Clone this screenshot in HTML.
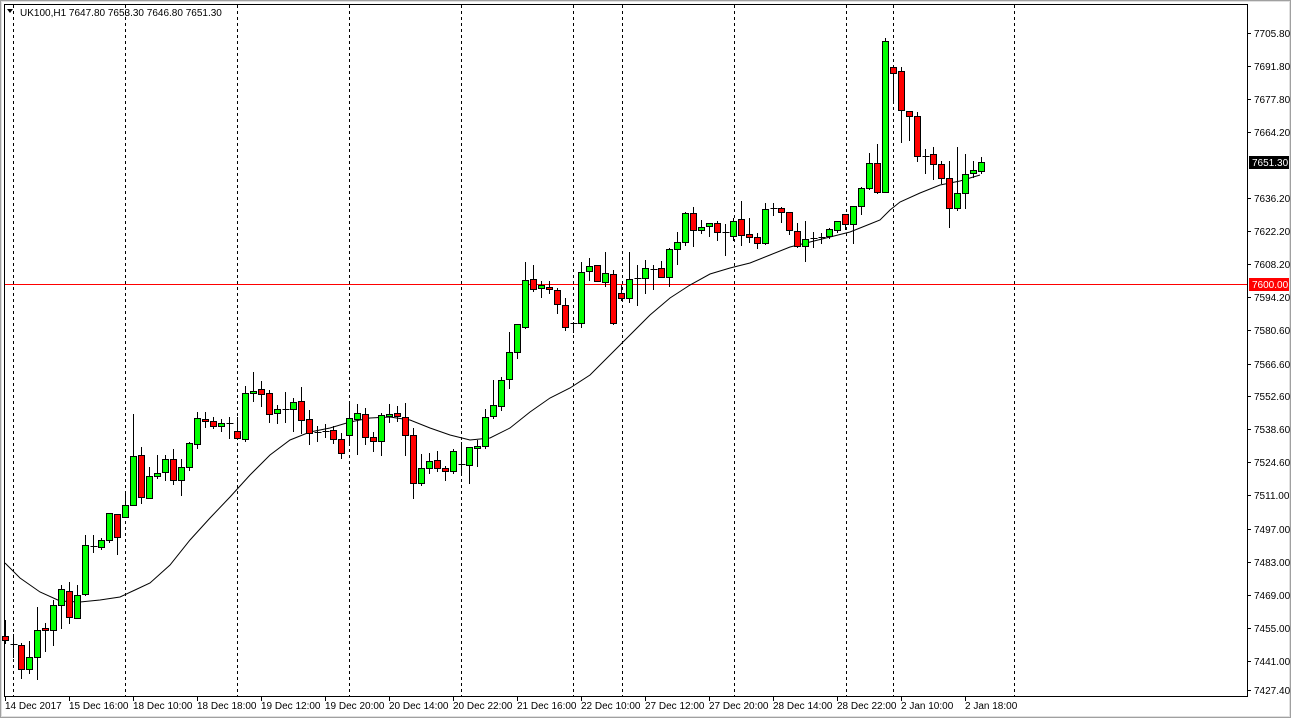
<!DOCTYPE html>
<html><head><meta charset="utf-8"><style>
html,body{margin:0;padding:0;background:#fff;overflow:hidden}
svg{display:block}
text{font-family:"Liberation Sans",sans-serif;font-size:10px;fill:#000}
</style></head><body>
<svg id="s" width="1292" height="719" xmlns="http://www.w3.org/2000/svg">
<rect x="0" y="0" width="1292" height="719" fill="#fff"/>
<rect x="0.5" y="0.5" width="1290" height="717" fill="none" stroke="#a0a0a0"/>
<rect x="1.5" y="1.5" width="1288" height="715" fill="none" stroke="#e0e0e0"/>
<line x1="4.5" y1="4" x2="4.5" y2="697" stroke="#000"/>
<line x1="4" y1="4.5" x2="1248" y2="4.5" stroke="#000"/>
<line x1="1247.5" y1="4" x2="1247.5" y2="697" stroke="#000"/>
<line x1="4" y1="696.5" x2="1248" y2="696.5" stroke="#000"/>
<g id="grid"></g>
<line x1="5" y1="284.5" x2="1247" y2="284.5" stroke="#ff0000"/>
<polyline id="ma" fill="none" stroke="#000" stroke-width="1"></polyline>
<g id="c"></g>
<g id="ax"></g>
<polygon points="7,9 13,9 10,13" fill="#000"/>
<text x="20" y="16">UK100,H1  7647.80 7653.30 7646.80 7651.30</text>
</svg>
<script>
var N="http://www.w3.org/2000/svg",s=document.getElementById('s');
function el(p,t,a,tx){var e=document.createElementNS(N,t);for(var k in a)e.setAttribute(k,a[k]);if(tx!=null)e.textContent=tx;document.getElementById(p).appendChild(e);return e;}
[13,125,237,349,461,573,622,734,846,893,1014].forEach(function(x){el('grid','line',{x1:x+.5,y1:5,x2:x+.5,y2:696,stroke:'#000','stroke-dasharray':'3,3'});});
var ma=[[5,563],[20,578],[40,592],[60,601],[80,602],[100,600],[120,597],[135,590],[150,583],[170,565],[190,540],[210,518],[230,497],[250,475],[270,455],[290,440],[310,432],[330,428],[350,422],[370,418],[390,417],[410,420],[430,428],[450,435],[470,440],[490,438],[510,428],[530,412],[550,398],[570,388],[590,375],[610,355],[630,335],[650,315],[670,298],[690,285],[710,274],[730,268],[750,263],[770,255],[790,247],[810,242],[830,237],[850,232],[870,224],[880,220],[890,210],[900,202],[920,193],[940,185],[960,181],[980,175]];
document.getElementById('ma').setAttribute('points',ma.map(function(p){return p.join(',')}).join(' '));
// [bodyTop, bodyBot, hi, lo, type g/r/d]
var C=[[636,640,620,643,'r'],[644,644,634,657,'d'],[645,669,643,678,'r'],[657,669,641,673,'g'],[630,657,607,679,'g'],[628,630,623,651,'r'],[605,630,600,645,'g'],[589,605,585,628,'g'],[591,617,582,623,'r'],[595,618,585,618,'g'],[545,594,535,595,'g'],[546,546,535,552,'d'],[540,547,538,549,'g'],[513,540,513,542,'g'],[514,537,514,554,'r'],[505,517,494,517,'g'],[456,505,414,505,'g'],[455,497,447,503,'r'],[476,498,467,498,'g'],[473,476,455,478,'g'],[459,472,455,480,'g'],[459,480,449,484,'r'],[467,480,459,495,'g'],[443,467,442,470,'g'],[418,444,412,448,'g'],[419,421,412,427,'r'],[421,426,417,428,'r'],[423,426,419,431,'g'],[423,423,417,438,'d'],[431,438,417,438,'r'],[393,439,386,441,'g'],
[391,393,372,401,'g'],[389,394,381,406,'r'],[393,414,390,422,'r'],[409,413,405,423,'g'],[409,409,392,422,'d'],[402,409,398,431,'g'],[401,420,387,433,'r'],[419,433,410,444,'r'],[432,432,426,441,'d'],[431,431,424,437,'d'],[430,439,426,443,'r'],[439,453,433,458,'r'],[418,435,403,445,'g'],[413,419,404,454,'g'],[414,437,408,444,'r'],[437,441,432,451,'r'],[415,441,413,455,'g'],[414,416,404,422,'g'],[413,416,406,421,'r'],[417,435,403,455,'r'],[435,483,428,498,'r'],[468,483,454,485,'g'],[461,468,453,473,'g'],[460,468,451,471,'r'],[468,471,466,480,'r'],[451,471,449,473,'g'],[464,464,442,473,'d'],[447,465,447,483,'g'],[446,448,440,466,'g'],[417,446,409,448,'g'],
[405,416,380,418,'g'],[380,406,377,410,'g'],[352,379,332,388,'g'],[324,352,324,358,'g'],[280,327,262,328,'g'],[279,289,265,291,'r'],[285,288,281,297,'g'],[287,289,281,293,'r'],[290,304,288,313,'r'],[305,327,298,330,'r'],[323,323,322,332,'d'],[272,323,262,327,'g'],[266,271,258,280,'g'],[265,281,265,281,'r'],[273,282,252,286,'g'],[274,323,270,324,'r'],[293,298,285,300,'r'],[279,298,252,302,'g'],[278,278,265,305,'d'],[268,278,260,293,'g'],[269,269,265,289,'d'],[268,277,261,277,'r'],[249,277,248,286,'g'],[242,249,232,264,'g'],[213,242,212,245,'g'],[213,230,207,246,'r'],[227,230,220,233,'g'],[223,226,223,236,'g'],[223,232,221,240,'r'],[232,232,224,255,'d'],[221,236,218,240,'g'],
[219,235,201,245,'r'],[234,237,218,242,'r'],[237,243,233,248,'r'],[209,243,203,244,'g'],[208,208,203,215,'d'],[208,212,207,222,'r'],[212,230,212,234,'r'],[231,246,223,247,'r'],[239,246,221,261,'g'],[238,238,232,247,'d'],[237,237,233,243,'d'],[229,236,228,238,'g'],[221,230,221,232,'g'],[214,224,214,229,'r'],[206,224,206,243,'g'],[188,206,187,214,'g'],[163,188,153,189,'g'],[163,192,144,193,'r'],[41,192,38,192,'g'],[67,73,65,103,'r'],[71,110,67,142,'r'],[111,116,111,140,'r'],[116,156,112,161,'r'],[156,156,149,173,'d'],[154,164,147,179,'r'],[164,178,161,183,'r'],[178,208,161,227,'r'],[193,208,147,210,'g'],[174,193,154,208,'g'],[170,173,161,177,'g'],[162,171,157,173,'g']];
C.forEach(function(c,i){var x=5.5+8*i;
el('c','line',{x1:x,y1:c[2],x2:x,y2:c[3]+1,stroke:'#000'});
if(c[4]=='d'){el('c','line',{x1:x-3,y1:c[0]+.5,x2:x+4,y2:c[0]+.5,stroke:'#000'});}
else{var h=Math.max(2,c[1]-c[0]);el('c','rect',{x:x-3,y:c[0]+.5,width:6,height:h,fill:c[4]=='g'?'#00ff00':'#ff0000',stroke:'#000'});}
});
var P=[['7705.80',33],['7691.80',66],['7677.80',99],['7664.20',132],['7636.20',198],['7622.20',231],['7608.20',264],['7594.20',297],['7580.60',330],['7566.60',364],['7552.60',396],['7538.60',429],['7524.60',462],['7511.00',495],['7497.00',529],['7483.00',562],['7469.00',595],['7455.00',628],['7441.00',661],['7427.40',690]];
P.forEach(function(p){el('ax','line',{x1:1247,y1:p[1]+.5,x2:1251,y2:p[1]+.5,stroke:'#000'});el('ax','text',{x:1254,y:p[1]+4},p[0]);});
el('ax','rect',{x:1249,y:156,width:40,height:13,fill:'#000'});el('ax','text',{x:1252,y:166,style:'fill:#fff'},'7651.30');
el('ax','rect',{x:1249,y:278,width:40,height:13,fill:'#ff0000'});el('ax','text',{x:1252,y:288,style:'fill:#fff'},'7600.00');
var D=['14 Dec 2017','15 Dec 16:00','18 Dec 10:00','18 Dec 18:00','19 Dec 12:00','19 Dec 20:00','20 Dec 14:00','20 Dec 22:00','21 Dec 16:00','22 Dec 10:00','27 Dec 12:00','27 Dec 20:00','28 Dec 14:00','28 Dec 22:00','2 Jan 10:00','2 Jan 18:00'];
D.forEach(function(d,i){var x=5+64*i;el('ax','line',{x1:x+.5,y1:696,x2:x+.5,y2:701,stroke:'#000'});el('ax','text',{x:x,y:709},d);});
</script>
</body></html>
